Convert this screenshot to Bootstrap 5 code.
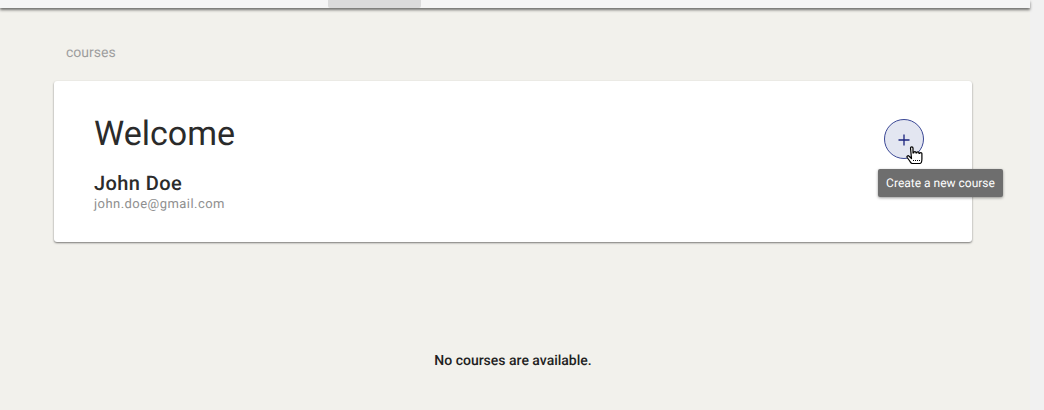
<!DOCTYPE html>
<html lang="en">
<head>
    <meta charset="UTF-8">
    <meta name="viewport" content="width=device-width, initial-scale=1.0">
    <title>Courses</title>
    <link href="https://cdn.jsdelivr.net/npm/bootstrap@5.3.0/dist/css/bootstrap.min.css" rel="stylesheet">
    <style>
        html, body {
            height: 410px;
            overflow: hidden;
        }
        body {
            background: #f1f1f1;
            font-family: Roboto, sans-serif;
            color: #212121;
            text-rendering: geometricPrecision;
        }
        .page-area {
            width: 1030px;
            height: 410px;
            background: #f2f1ec;
        }
        .top-bar {
            height: 8px;
            background: #f5f5f5;
            box-shadow: 0 2px 3px rgba(0, 0, 0, 0.55);
            padding-left: 328px;
        }
        .top-tab {
            width: 93px;
            height: 8px;
            background: #dbdbdb;
            border-radius: 0 0 2px 2px;
        }
        .crumb {
            padding: 37px 0 0 66px;
            height: 73px;
            font-size: 14px;
            line-height: 16px;
            color: #9e9e9e;
        }
        .welcome-card {
            margin-left: 54px;
            width: 918px;
            height: 161px;
            padding: 33px 48px 0 40px;
            background: #fff;
            border: 0;
            border-radius: 3px;
            box-shadow: 0 1px 2px rgba(0, 0, 0, 0.5);
        }
        .welcome-title {
            font-size: 34px;
            font-weight: 400;
            line-height: 40px;
            color: #2b2b2b;
            margin: 0 0 18px;
        }
        .user-name {
            font-size: 20px;
            font-weight: 500;
            line-height: 22px;
            letter-spacing: 0.4px;
            color: #2b2b2b;
        }
        .user-mail {
            font-size: 13px;
            line-height: 22px;
            letter-spacing: 0.45px;
            color: #8f8f8f;
        }
        .add-btn {
            width: 40px;
            height: 40px;
            margin-top: 5px;
            padding: 2px 0 0;
            background: #e3e6f1;
            border: 1px solid #3a4795;
            border-radius: 50%;
        }
        .add-btn:hover {
            background: #e3e6f1;
            border-color: #3a4795;
        }
        .tip-box {
            left: 878px;
            top: 169px;
            width: 125px;
            height: 28px;
            background: #6e6e6e;
            color: #fff;
            font-size: 12px;
            line-height: 29px;
            text-align: center;
            border-radius: 2px;
            box-shadow: 0 1px 3px rgba(0, 0, 0, 0.4);
        }
        .hand-cursor {
            left: 906px;
            top: 146px;
        }
        .empty-note {
            margin-top: 109px;
            font-size: 14px;
            font-weight: 500;
            line-height: 20px;
            width: 1026px;
        }
    </style>
</head>
<body>

    <div class="page-area position-relative">
        <div class="top-bar">
            <div class="top-tab"></div>
        </div>
        <div class="crumb">courses</div>
        <div class="card welcome-card flex-row justify-content-between align-items-start">
            <div>
                <h1 class="welcome-title">Welcome</h1>
                <div class="user-name">John Doe</div>
                <div class="user-mail">john.doe@gmail.com</div>
            </div>
            <button type="button" class="btn add-btn d-flex align-items-center justify-content-center" aria-label="Create a new course">
                <svg width="12" height="12" viewBox="0 0 12 12"><path d="M6 0.500v11M0.500 6h11" stroke="#1a237e" stroke-width="1.300" fill="none"/></svg>
            </button>
        </div>
        <div class="empty-note text-center">No courses are available.</div>

        <div class="tip-box position-absolute">Create a new course</div>
        <svg class="hand-cursor position-absolute" width="18" height="19" viewBox="0 0 18 19">
            <path d="M4.500 2c0-1.600 2.500-1.600 2.500 0v5h0.700v-0.500c0-1.300 2.300-1.300 2.300 0v0.500h0.700v-0.200c0-1.300 2.300-1.300 2.300 0v0.700h0.600c0-1.200 2.300-1.200 2.300 0v5.500c0 2.400-1 4.500-2.200 4.500h-7.500c-1 0-1.500-1-2.500-2.500l-2.500-3.500c-0.800-1.300 0.900-2.400 1.900-1.200l2.400 2.200z" fill="#fff" stroke="#000" stroke-width="1.200" stroke-linejoin="round"/>
            <path d="M7 14.500h8" stroke="#000" stroke-width="1" stroke-dasharray="1 1"/>
        </svg>
    </div>

    <script src="https://cdn.jsdelivr.net/npm/bootstrap@5.3.0/dist/js/bootstrap.bundle.min.js"></script>
</body>
</html>
